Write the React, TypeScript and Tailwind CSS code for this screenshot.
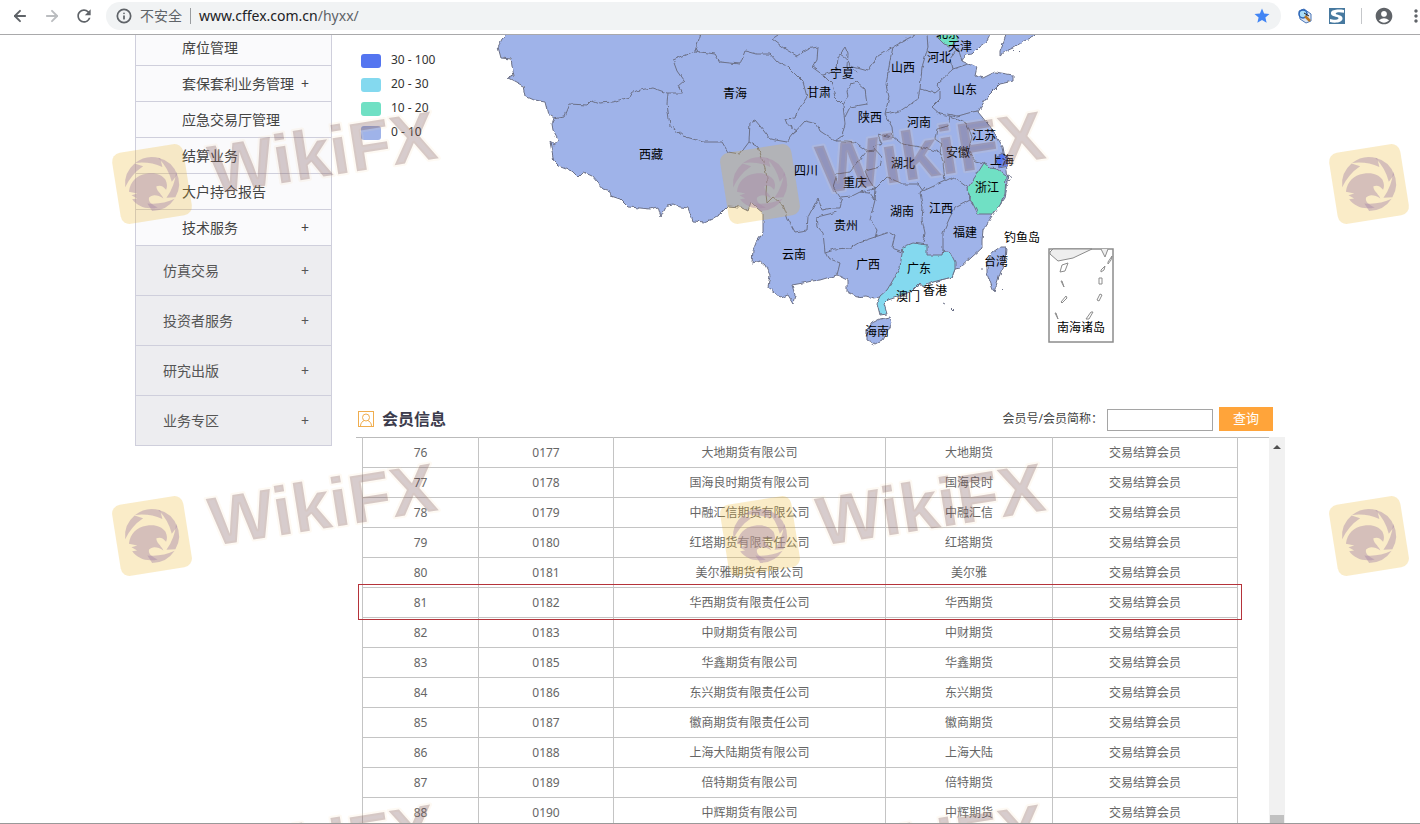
import clsx from "clsx";
import { ArrowLeft, ArrowRight, Info } from "lucide-react";
import { MdAccountCircle, MdMoreVert, MdRefresh, MdStar } from "react-icons/md";

const subItems = [
  { label: "席位管理", more: false },
  { label: "套保套利业务管理", more: true },
  { label: "应急交易厅管理", more: false },
  { label: "结算业务", more: false },
  { label: "大户持仓报告", more: false },
  { label: "技术服务", more: true }
];

const mainItems = ["仿真交易", "投资者服务", "研究出版", "业务专区"];

const legend = [
  { label: "30 - 100", color: "bg-[#5475f0]" },
  { label: "20 - 30", color: "bg-[#84d9ef]" },
  { label: "10 - 20", color: "bg-[#70e0c4]" },
  { label: "0 - 10", color: "bg-[#9fb3e9]" }
];

const members = [
  ["76", "0177", "大地期货有限公司", "大地期货"],
  ["77", "0178", "国海良时期货有限公司", "国海良时"],
  ["78", "0179", "中融汇信期货有限公司", "中融汇信"],
  ["79", "0180", "红塔期货有限责任公司", "红塔期货"],
  ["80", "0181", "美尔雅期货有限公司", "美尔雅"],
  ["81", "0182", "华西期货有限责任公司", "华西期货"],
  ["82", "0183", "中财期货有限公司", "中财期货"],
  ["83", "0185", "华鑫期货有限公司", "华鑫期货"],
  ["84", "0186", "东兴期货有限责任公司", "东兴期货"],
  ["85", "0187", "徽商期货有限责任公司", "徽商期货"],
  ["86", "0188", "上海大陆期货有限公司", "上海大陆"],
  ["87", "0189", "倍特期货有限公司", "倍特期货"],
  ["88", "0190", "中辉期货有限公司", "中辉期货"]
];

const provinceLabels: [string, number, number][] = [
  ["北京", 948, 38],
  ["天津", 960, 51],
  ["河北", 939, 62],
  ["山西", 903, 72],
  ["宁夏", 842, 78],
  ["青海", 735, 98],
  ["甘肃", 819, 97],
  ["山东", 965, 94],
  ["陕西", 870, 122],
  ["河南", 919, 127],
  ["江苏", 984, 140],
  ["西藏", 651, 159],
  ["安徽", 958, 157],
  ["上海", 1002, 165],
  ["湖北", 903, 168],
  ["四川", 806, 175],
  ["重庆", 855, 187],
  ["浙江", 987, 192],
  ["湖南", 902, 216],
  ["江西", 941, 213],
  ["贵州", 846, 230],
  ["福建", 965, 237],
  ["钓鱼岛", 1022, 242],
  ["云南", 794, 259],
  ["广西", 868, 269],
  ["广东", 919, 273],
  ["台湾", 996, 266],
  ["香港", 935, 295],
  ["澳门", 908, 301],
  ["海南", 877, 336],
  ["南海诸岛", 1081, 332]
];

const mainland =
  "M512 30L502 39L498 47L501 58L511 59L512 66L514 76L508 78L514 81L523 86L525 96L534 100L545 102L548 114L554 118L552 124L553 130L557 137L558 142L554 145L550 142L552 152L554 162L558 166L566 169L572 171L578 177L583 172L592 176L603 189L610 191L611 196L620 199L628 207L640 208L650 209L658 207L661 217L667 205L673 204L680 207L688 208L693 221L705 222L712 219L720 214L728 206L740 207L748 211L751 202L757 208L763 213L763 233L756 243L753 250L752 263L760 261L765 265L770 275L768 287L775 292L780 298L788 295L793 303L795 295L792 285L803 283L812 281L820 280L830 277L837 275L847 280L847 292L857 297L866 296L873 298L880 297L897 297L920 284L933 282L952 277L955 269L960 268L972 257L982 248L982 240L983 230L992 216L1000 205L1005 198L1008 183L1007 170L1003 147L992 129L978 112L987 97L1000 84L1013 81L1013 75L995 72L983 78L975 76L977 67L968 64L962 61L965 55L972 54L979 47L987 41L993 30Z";

const borders = [
  "M554 118L564 116L569 104L587 105L592 100L600 103L612 102L630 97L633 92L645 89L653 88L667 93L682 93L678 86L684 81L677 71L673 60L695 51L702 30",
  "M695 51L715 54L720 62L740 64L745 51L756 54L770 54L777 62L787 66L803 82L807 97L797 112L795 118L785 119L787 124L797 131L793 134L787 142L770 139L760 126L755 120L750 122L749 142",
  "M668 93L667 104L670 126L683 136L703 142L722 142L728 152L740 154L749 142L758 147L763 161L767 177L766 194L767 203",
  "M778 35L772 39L785 49L797 56L807 49L818 47L817 59L812 67L823 75L832 84L835 97L843 105L845 124L842 136L835 141L820 131L817 124L805 121L793 134",
  "M823 75L837 71L838 57L845 47L848 54L847 66L857 72M843 105L848 97L847 90L851 84L857 82L865 89L867 104L850 107L845 117",
  "M840 54L847 59L850 66L868 71L878 56L893 47L907 39L915 35",
  "M893 47L890 61L886 84L889 97L885 114L892 127L893 137L902 144L920 147L940 152L943 162L945 181",
  "M885 114L900 111L918 99L920 89L922 67L928 47L927 35M920 89L935 93L940 89L937 84L953 69L968 64",
  "M940 92L940 99L932 107L940 114L950 116L948 126L937 129L935 139L942 144L940 152",
  "M947 114L958 116L972 112L978 111M950 116L967 124L972 137L968 151L975 161L984 163M945 181L953 177L967 187L970 200L973 204",
  "M893 137L877 134L882 144L873 147L882 157L880 167L865 171L869 180L875 189L887 177L903 184L918 184L923 191L945 181",
  "M835 141L847 141L855 142L867 151L875 150M867 151L850 172L837 174L833 187L840 197L852 196L860 192L875 189",
  "M767 203L773 197L783 205L789 221L795 232L807 230L808 217L818 198L822 210L832 208L840 208L842 200L838 197M837 212L817 217L818 227L823 233L825 252",
  "M860 192L870 193L875 200L870 220L877 230L875 238M875 189L874 200",
  "M825 252L834 249L850 248L860 242L875 237L890 232L895 235L892 248L903 252M825 252L828 258L840 263L837 275",
  "M925 187L920 193L923 207L922 220L925 233L923 243M970 200L955 208L950 217L943 233L943 250",
  "M953 69L951 58L958 48L962 61"
];

const watermarks = [184, 536, 877].flatMap((y) => [
  { x: 152, y, word: true },
  { x: 760, y, word: true },
  { x: 1369, y, word: false }
]);

const font = "font-['Noto_Sans','Noto_Sans_CJK_SC',sans-serif]";

function BrowserBar() {
  return (
    <header className="flex h-[35px] shrink-0 items-center border-b border-[#a9a9ab] bg-white pb-0.5 text-[#5f6368]">
      <button type="button" aria-label="后退" className="ml-3">
        <ArrowLeft className="size-4 scale-110" strokeWidth={2.6} />
      </button>
      <button type="button" aria-label="前进" className="ml-4 text-[#bbbdc0]">
        <ArrowRight className="size-4 scale-110" strokeWidth={2.6} />
      </button>
      <button type="button" aria-label="刷新" className="ml-3.5">
        <MdRefresh className="size-5" />
      </button>
      <div className="ml-3 flex h-7 flex-1 items-center rounded-full bg-[#f1f3f4] pr-2.5 pl-2.5">
        <Info className="size-4" strokeWidth={2.6} />
        <span className="ml-2 text-sm">不安全</span>
        <span className="mx-2 h-4 w-px bg-[#9a9da0]" />
        <a href="#" className="flex-1 text-sm">
          <span className="text-[#202124]">www.cffex.com.cn</span>/hyxx/
        </a>
        <MdStar className="size-[18px] text-[#4285f4]" />
      </div>
      <svg viewBox="0 0 16 16" className="ml-4 size-4" aria-hidden="true">
        <path d="M2 3L7 1L14 6V13L9 15L3 11Z" fill="#dbe5f4" stroke="#4a77b8" />
        <circle cx="6" cy="6" r="4" fill="#a8dcf7" stroke="#2862b5" strokeWidth="1.5" />
        <path d="M8 8L13 13" stroke="#b87824" strokeWidth="2.5" />
        <path d="M7 5L12 8" stroke="#222" />
      </svg>
      <svg viewBox="0 0 16 16" className="ml-4 size-4" aria-hidden="true">
        <rect width="16" height="16" fill="#47799f" />
        <path
          d="M15 2C9 1 3 1.500 2 4.500C1.500 7.500 4 8 8 9C10 9.500 10 11 8 11.500C6 12 3 11.500 1 11V14C6 15.500 13 14.500 13.500 11C14 8 11 7.500 8 6.500C6 5.800 6.500 4.500 9 4.200C11 4 13 4.300 15 4.800Z"
          fill="#fff"
        />
      </svg>
      <span className="ml-4 h-4 w-px bg-[#c5c7ca]" />
      <button type="button" aria-label="账户" className="ml-3">
        <MdAccountCircle className="size-5" />
      </button>
      <button type="button" aria-label="菜单" className="-mr-1.5 ml-3">
        <MdMoreVert className="size-5" />
      </button>
    </header>
  );
}

function Sidebar() {
  return (
    <nav className="-mt-[5px] w-[197px] shrink-0 self-start border-x border-b border-[#cfcfdc] text-sm">
      {subItems.map((item) => (
        <a
          key={item.label}
          href="#"
          className="flex h-9 items-center justify-between border-b border-[#cfcfdc] bg-[#fafafc] pr-[22px] pl-[46px] text-[#444]"
        >
          {item.label}
          {item.more && <span>+</span>}
        </a>
      ))}
      {mainItems.map((label, i) => (
        <a
          key={label}
          href="#"
          className={clsx(
            "flex items-center justify-between bg-[#ededf0] pr-[22px] pl-[27px] text-[#555]",
            i < mainItems.length - 1 ? "h-[50px] border-b border-[#cfcfdc]" : "h-[49px]"
          )}
        >
          {label}
          <span>+</span>
        </a>
      ))}
    </nav>
  );
}

function ChinaMap() {
  return (
    <svg viewBox="490 35 640 320" className="h-80 w-[640px] shrink-0" role="img" aria-label="会员分布">
      <defs>
        <filter id="coast" x="-5%" y="-5%" width="110%" height="110%" colorInterpolationFilters="sRGB">
          <feTurbulence type="fractalNoise" baseFrequency="0.2" numOctaves="1" seed="4" />
          <feDisplacementMap in="SourceGraphic" scale="4" xChannelSelector="R" yChannelSelector="G" />
        </filter>
      </defs>
      <g filter="url(#coast)" fill="#9fb3e9" stroke="#6c7188" strokeWidth="1" strokeLinejoin="round">
        <path d={mainland} />
        <path d="M1008 30L1000 51L1000 56L1006 51L1013 48L1024 41L1033 37L1040 30Z" />
        <path d="M872 323L880 319L890 317L892 323L888 331L883 340L875 344L867 340L867 330Z" />
        <path d="M1000 247L1006 247L1005 260L998 280L994 292L992 287L987 273L987 263L993 252Z" />
        {borders.map((d) => (
          <path key={d} d={d} fill="none" />
        ))}
        <path
          d="M903 247L913 243L927 245L927 255L942 255L943 250L950 252L955 262L955 269L952 277L933 282L923 287L920 283L912 291L897 297L888 300L884 304L887 314L880 315L877 303L880 296L887 290L893 280L900 267Z"
          fill="#84d9ef"
        />
        <path
          d="M984 163L990 168L997 169L1006 176L1005 194L1000 205L993 214L978 214L973 204L967 189L975 177Z"
          fill="#70e0c4"
        />
        <path d="M938 30L938 38L944 44L950 46L957 41L958 30Z" fill="#70e0c4" />
        <path d="M997 156L1003 153L1007 157L1007 166L998 168Z" fill="#5475f0" />
        <path d="M1008 175L1012 177M1007 181L1011 180M943 303L945 304M952 308L954 310M981 269L983 269M1002 290L1003 291M1013 51L1014 50M1019 52L1020 51" />
      </g>
      <g fill="none" stroke="#8c8c8c" strokeWidth="1">
        <rect x="1049" y="249" width="64" height="93" strokeWidth="1.5" />
        <path d="M1050 252L1053 249H1092L1073 258L1058 261L1050 254ZM1101 249L1105 257L1108 249" fill="#eee" />
        <path d="M1062 265L1068 263L1065 271L1060 272ZM1061 281L1064 287L1062 281ZM1061 302L1066 296L1067 298L1062 303ZM1055 313L1058 319L1056 313ZM1099 278H1102V284H1099ZM1101 270L1105 266L1104 270L1101 272ZM1108 262L1112 256L1111 260L1108 264ZM1097 300L1100 294L1102 295L1099 301ZM1086 319L1091 312L1093 312L1089 319Z" />
      </g>
      <g fontSize="12" textAnchor="middle" fill="#000">
        {provinceLabels.map(([name, x, y]) => (
          <text key={name} x={x} y={y}>
            {name}
          </text>
        ))}
      </g>
    </svg>
  );
}

function MapSection() {
  return (
    <section className="flex h-[368px] items-start">
      <ul className="mt-[13px] ml-[5px] w-[129px] shrink-0 text-xs text-[#333]">
        {legend.map((item) => (
          <li key={item.label} className="flex h-6 items-center gap-2.5">
            <span className={clsx("mt-0.5 h-3.5 w-5 rounded-[3px]", item.color)} />
            {item.label}
          </li>
        ))}
      </ul>
      <ChinaMap />
    </section>
  );
}

function MemberSection() {
  return (
    <section className="flex min-h-0 flex-1 flex-col">
      <div className="flex h-[35px] shrink-0 items-center border-b border-[#bbb] pr-3 pb-0.5">
        <svg viewBox="0 0 16 16" className="ml-0.5 size-4" fill="none" stroke="#f0ad4e" aria-hidden="true">
          <rect x="0.5" y="0.5" width="15" height="15" />
          <circle cx="8" cy="6.500" r="3.500" />
          <path d="M2.500 15C2.500 12 4.500 10 6.500 9.500M13.500 15C13.500 12 11.500 10 9.500 9.500" />
        </svg>
        <h2 className="ml-2 flex-1 text-base font-bold text-[#3c3c4c]">会员信息</h2>
        <label htmlFor="member" className="text-xs text-[#444]">
          会员号/会员简称：
        </label>
        <input id="member" type="text" className="mt-0.5 ml-1 h-[22px] w-[106px] border border-[#a5a5a5] bg-white px-1 text-xs" />
        <button type="button" className="ml-1.5 h-6 w-[54px] bg-[#ffa43a] text-[13px] text-white">
          查询
        </button>
      </div>
      <div className="-mt-px flex min-h-0 flex-1 overflow-hidden pl-1.5">
        <table className="w-[876px] shrink-0 table-fixed border-collapse self-start text-center text-xs text-[#666]">
          <colgroup>
            <col className="w-[116px]" />
            <col className="w-[135px]" />
            <col className="w-[272px]" />
            <col className="w-[167px]" />
            <col />
          </colgroup>
          <tbody>
            {members.map(([index, code, name, short]) => (
              <tr key={code} className="relative h-[30px]">
                {[index, code, name, short, "交易结算会员"].map((cell) => (
                  <td key={cell} className="border border-t-0 border-[#c4c4c4] p-0 pt-0.5">
                    {cell}
                    {cell === "0182" && (
                      <span className="absolute -top-[3px] -right-1 -bottom-[3px] -left-[5px] border border-[#b5333a]" />
                    )}
                  </td>
                ))}
              </tr>
            ))}
          </tbody>
        </table>
        <div className="ml-auto flex w-4 flex-col items-center justify-between bg-[#f1f1f1]" aria-hidden="true">
          <span className="mt-2 border-x-4 border-b-4 border-x-transparent border-b-[#505050]" />
          <span className="h-2 w-3.5 bg-[#c1c1c1]" />
        </div>
      </div>
    </section>
  );
}

function WatermarkBadge() {
  return (
    <g transform="rotate(-9)">
      <rect x="-36" y="-36" width="72" height="72" rx="9" fill="#ecb424" fillOpacity="0.25" />
      <g fill="#a98aa8" fillOpacity="0.45">
        {[-20, 40, 180, 238, 290].map((angle) => (
          <path
            key={angle}
            d="M27 1A27 27 0 0 1 14 23L6 19Q19 13 27 1Z"
            transform={`rotate(${angle})`}
          />
        ))}
        <path d="M-24 4C-21 -6 -14 -11 -4 -11C5 -11 11 -8 14 -2C15 2 15 5 13 8C11 4 8 2 4 3C3 7 7 10 9 16C4 11 -2 10 -5 13C-7 17 -3 21 2 24C-9 25 -18 20 -22 12L-17 12L-22 8L-16 7Z" />
      </g>
    </g>
  );
}

function WatermarkWord() {
  return (
    <text
      transform="translate(61 10) rotate(-9)"
      fontSize="69"
      fontWeight="700"
      fill="#6b4248"
      fillOpacity="0.27"
      stroke="#f6d9b0"
      strokeOpacity="0.14"
      strokeWidth="4"
      strokeLinejoin="round"
      paintOrder="stroke"
      className="font-['Liberation_Sans',sans-serif]"
    >
      WikiFX
    </text>
  );
}

function Watermarks() {
  return (
    <svg className="pointer-events-none absolute inset-0 size-full" aria-hidden="true">
      {watermarks.map(({ x, y, word }) => (
        <g key={`${x}-${y}`} transform={`translate(${x} ${y})`}>
          <WatermarkBadge />
          {word && <WatermarkWord />}
        </g>
      ))}
    </svg>
  );
}

export default function App() {
  return (
    <div className={clsx("relative flex h-screen flex-col overflow-hidden border-b border-[#999] bg-white", font)}>
      <BrowserBar />
      <main className="mx-auto flex min-h-0 w-full max-w-[1150px] flex-1 gap-6 overflow-hidden">
        <Sidebar />
        <div className="flex min-w-0 flex-1 flex-col">
          <MapSection />
          <MemberSection />
        </div>
      </main>
      <Watermarks />
    </div>
  );
}
